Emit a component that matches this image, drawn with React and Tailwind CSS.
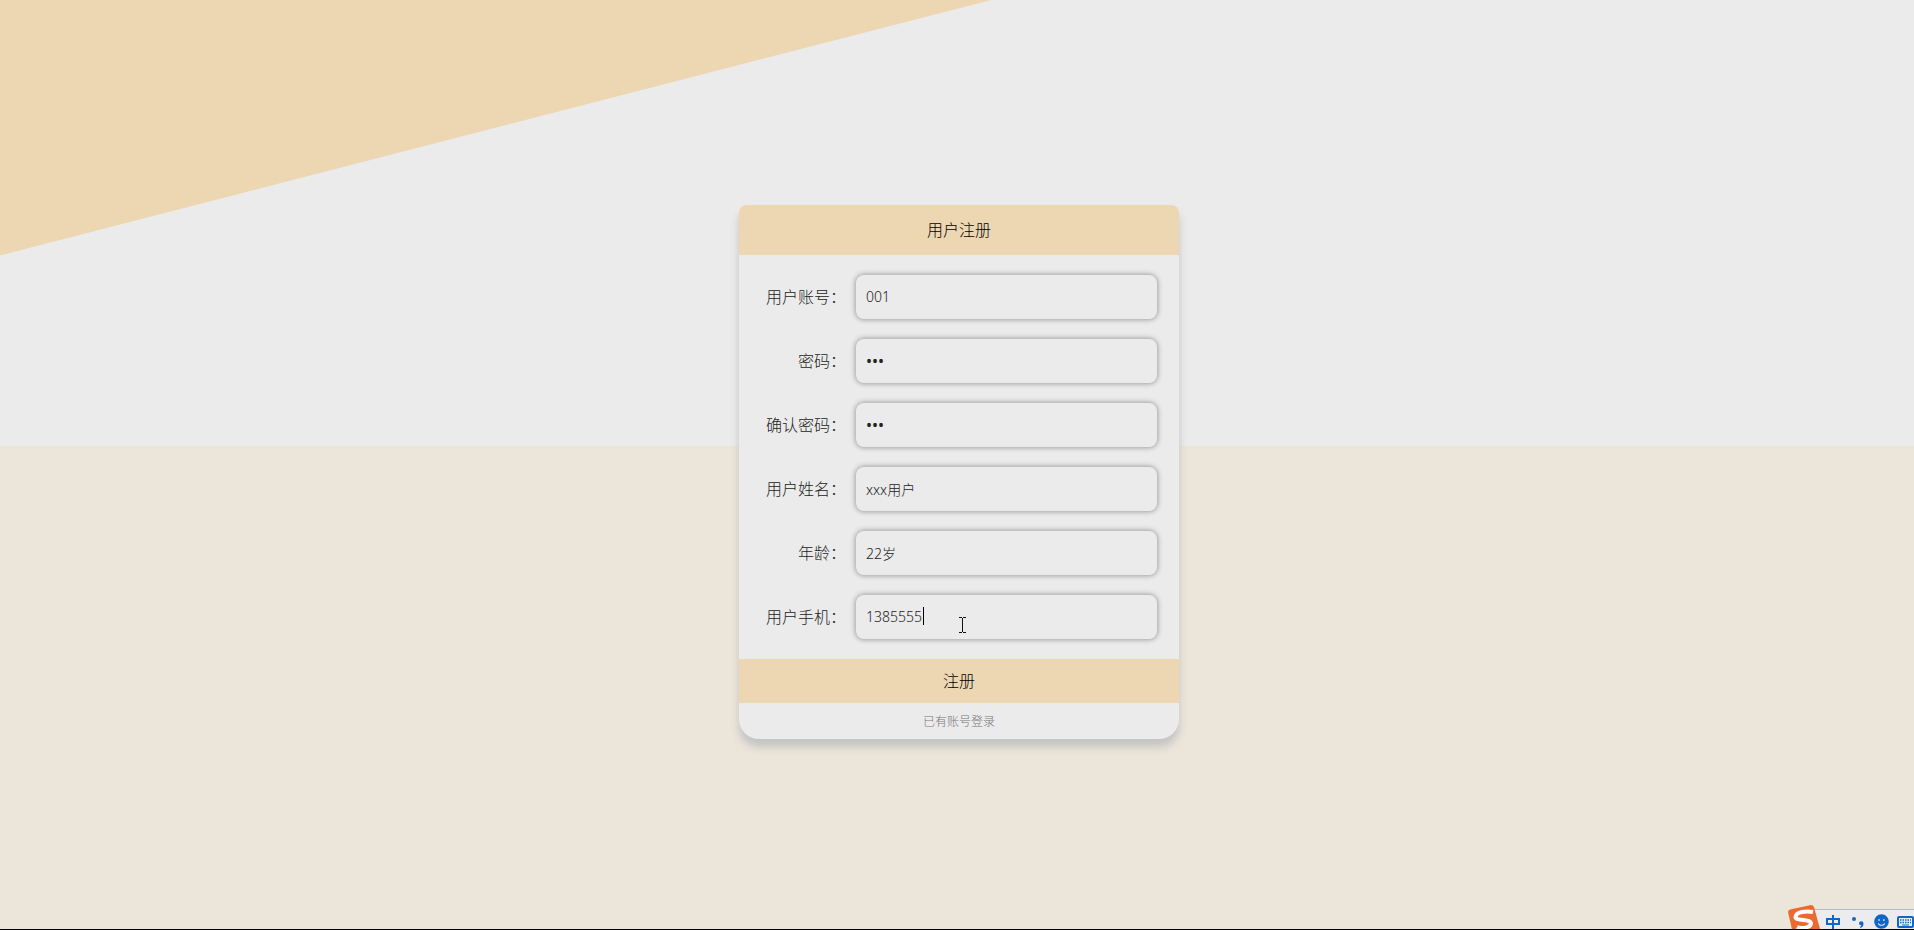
import { useState } from "react"
import { FaSmile } from "react-icons/fa"

const fields = [
    { name: "account", label: "用户账号：", type: "text", value: "001" },
    { name: "password", label: "密码：", type: "password", value: "001" },
    { name: "confirm", label: "确认密码：", type: "password", value: "001" },
    { name: "username", label: "用户姓名：", type: "text", value: "xxx用户" },
    { name: "age", label: "年龄：", type: "text", value: "22岁" },
    { name: "phone", label: "用户手机：", type: "text", value: "1385555" },
]

function Field({ field, children }) {
    const [value, setValue] = useState(field.value)

    return (
        <div className="flex items-center">
            <label htmlFor={field.name} className="w-[107px] shrink-0 text-right text-base font-light text-[#222]">
                {field.label}
            </label>
            <div className="relative ml-2.5 flex-1">
                <input
                    id={field.name}
                    name={field.name}
                    type={field.type}
                    value={value}
                    onChange={(e) => setValue(e.target.value)}
                    className={`block h-11 w-full rounded-lg bg-[#ebebeb] px-2.5 text-[#222] shadow-[0_0_5px_1px_#a0a0a0] outline-none ${field.type === "password" ? "text-base" : "text-sm font-light"}`}
                />
                {children}
            </div>
        </div>
    )
}

// Caret and the I-beam pointer over the phone input
function Caret() {
    return (
        <>
            <span className="absolute top-3 left-[67px] h-[18px] w-px bg-black" />
            <svg className="absolute top-[22px] left-[103px] h-4 w-[7px]" viewBox="0 0 7 16" fill="none" stroke="#111">
                <path d="M0 .5H3M4 .5H7M3.5 1V15M0 15.5H3M4 15.5H7" />
            </svg>
        </>
    )
}

// Input method toolbar in the corner
function ImeBar() {
    return (
        <div className="absolute right-0 bottom-0 flex h-5 w-[108px] items-center border-t border-[#b4bccb] bg-[#ececee] pt-1 pl-5 text-[#0f68c8]">
            <svg className="absolute bottom-0 -left-[18px] h-6 w-8" viewBox="0 0 32 24">
                <path d="M0 7Q0 5 2 4.500L23 0Q25 0 26 2L32 24Q32 26 29 27L8 31Q6 31 5 29Z" fill="#ec6a2f" />
                <path d="M25 7C18 5.500 8 7 7.500 12C7.500 16.500 22 13.500 23 18C23 23 13 24 9 22" fill="none" stroke="#fff" strokeWidth="4" />
            </svg>
            <svg className="h-[14px] w-[14px] shrink-0" viewBox="0 0 14 14" fill="none" stroke="currentColor" strokeWidth="2">
                <path d="M1 4H13V9H1ZM7 0V14" />
            </svg>
            <svg className="ml-3 h-[14px] w-3 shrink-0" viewBox="0 0 12 14" fill="currentColor">
                <circle cx="2" cy="4" r="2" />
                <path d="M7 8.500a2 2 0 1 1 4.500 0q0 3.500-3 4.500l-.7-1q1.500-.7 1.500-1.800Q7 10 7 8.500Z" />
            </svg>
            <FaSmile className="ml-2.5 size-[15px] shrink-0" />
            <svg className="ml-2 h-3 w-[17px] shrink-0" viewBox="0 0 17 12" fill="none" stroke="currentColor">
                <rect x="1" y="1" width="15" height="10" rx="1" strokeWidth="2" />
                <path d="M3 4H14M3 6.500H14" strokeWidth="1.500" strokeDasharray="1.500 1" />
                <path d="M5 9H12" />
            </svg>
        </div>
    )
}

export default function App() {
    return (
        <div className="relative flex min-h-screen flex-col overflow-hidden border-b border-black bg-[linear-gradient(#ebebeb_48%,#ece5da_48%)] font-['Noto_Sans','Noto_Sans_CJK_SC',sans-serif]">
            <div className="absolute inset-0 bg-[#edd7b3] [clip-path:polygon(0_0,51.8%_0,0_27.5%)]" />

            <main className="relative flex flex-1 items-center justify-center pt-[14px] pl-1">
                <form
                    className="w-full max-w-[440px] overflow-hidden rounded-t-lg rounded-b-[20px] bg-[#ebebeb] shadow-[0_8px_8px_#c4c4c4]"
                    onSubmit={(e) => e.preventDefault()}
                >
                    <h1 className="bg-[#edd7b3] text-center text-base leading-[50px] font-light text-black">用户注册</h1>

                    <div className="flex flex-col gap-5 py-5 pr-[22px]">
                        {fields.map((field) => (
                            <Field key={field.name} field={field}>
                                {field.name === "phone" && <Caret />}
                            </Field>
                        ))}
                    </div>

                    <button type="submit" className="block h-11 w-full cursor-pointer bg-[#edd7b3] text-base font-light text-black">
                        注册
                    </button>
                    <a href="#login" className="block pt-0.5 text-center text-xs leading-[34px] font-light text-[#777]">已有账号登录</a>
                </form>
            </main>

            <ImeBar />
        </div>
    )
}
